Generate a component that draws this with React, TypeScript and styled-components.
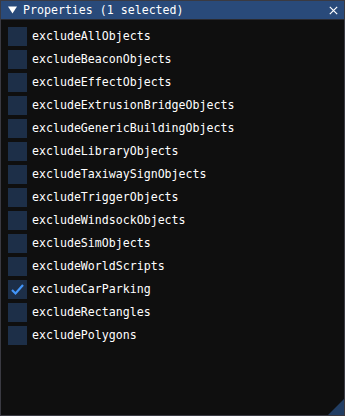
import React from "react";
import styled, { createGlobalStyle } from "styled-components";

const Global = createGlobalStyle`
  html, body { margin: 0; padding: 0; background: #0f0f0f; }
  body { width: 345px; height: 416px; overflow: hidden; }
`;

const Window = styled.div`
  box-sizing: border-box;
  width: 345px;
  height: 416px;
  background: #0f0f0f;
  border: 1px solid #3a3a42;
  display: flex;
  flex-direction: column;
  position: relative;
  font-family: "DejaVu Sans Mono", "Liberation Mono", monospace;
  font-size: 11.6px;
  color: #ffffff;
`;

const TitleBar = styled.div`
  height: 18px;
  background: #294a7a;
  display: flex;
  align-items: center;
  padding: 0 6px 0 7px;
  gap: 6px;
  border-bottom: 1px solid #2a2a30;
`;

const Title = styled.span`
  flex: 1;
  line-height: 18px;
  white-space: pre;
`;

const Content = styled.div`
  display: flex;
  flex-direction: column;
  gap: 4px;
  padding: 7px 7px 0 7px;
`;

const Row = styled.label`
  display: flex;
  align-items: center;
  gap: 5px;
  height: 19px;
`;

const Box = styled.span`
  width: 19px;
  height: 19px;
  background: #1d2f48;
  display: flex;
  align-items: center;
  justify-content: center;
`;

const Label = styled.span`
  line-height: 19px;
  white-space: pre;
`;

const Grip = styled.svg`
  position: absolute;
  right: 0;
  bottom: 0;
`;

const items = [
  "excludeAllObjects",
  "excludeBeaconObjects",
  "excludeEffectObjects",
  "excludeExtrusionBridgeObjects",
  "excludeGenericBuildingObjects",
  "excludeLibraryObjects",
  "excludeTaxiwaySignObjects",
  "excludeTriggerObjects",
  "excludeWindsockObjects",
  "excludeSimObjects",
  "excludeWorldScripts",
  "excludeCarParking",
  "excludeRectangles",
  "excludePolygons",
];

const checked = new Set(["excludeCarParking"]);

export default function App() {
  return (
    <>
      <Global />
      <Window>
        <TitleBar>
          <svg width="9" height="8" viewBox="0 0 9 8">
            <polygon points="0,0.5 9,0.5 4.5,7.5" fill="#ffffff" />
          </svg>
          <Title>Properties (1 selected)</Title>
          <svg width="9" height="9" viewBox="0 0 9 9">
            <path d="M0.8 0.8 L8.2 8.2 M8.2 0.8 L0.8 8.2" stroke="#ffffff" strokeWidth="1.2" />
          </svg>
        </TitleBar>
        <Content>
          {items.map((it) => (
            <Row key={it}>
              <Box>
                {checked.has(it) && (
                  <svg width="19" height="19" viewBox="0 0 19 19">
                    <polyline
                      points="4,10 7.5,13.5 15,5"
                      fill="none"
                      stroke="#4296fa"
                      strokeWidth="2.2"
                    />
                  </svg>
                )}
              </Box>
              <Label>{it}</Label>
            </Row>
          ))}
        </Content>
        <Grip width="16" height="16" viewBox="0 0 16 16">
          <polygon points="16,0 16,16 0,16" fill="#223e63" />
        </Grip>
      </Window>
    </>
  );
}
